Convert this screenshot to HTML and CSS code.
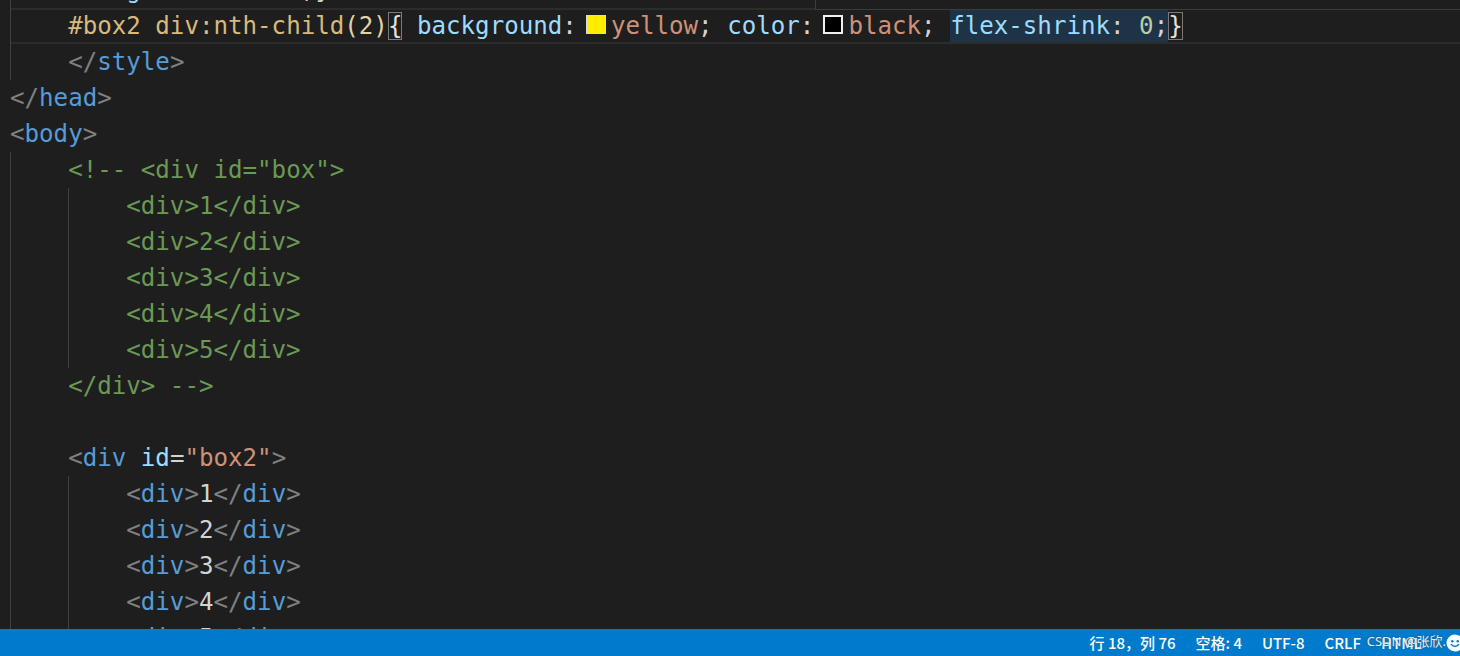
FILE: index.html
```html
<!DOCTYPE html>
<html lang="zh">
<head>
<meta charset="utf-8">
<title>editor</title>
<link rel="stylesheet" href="styles.css">
</head>
<body>
<div class="editor">
  <div class="code">
    <div class="ln"><span class="ind g"></span><span class="pr">background</span><span class="pn">: </span><span class="pn">blue;}</span></div>
    <div class="ln cur"><span class="ind g"></span><span class="sel">#box2 div:nth-child</span><span class="br">(2)</span><span class="bm">{</span><span class="pn"> </span><span class="pr">background</span><span class="pn">:</span><span class="sw sw-y"></span><span class="st">yellow</span><span class="pn">; </span><span class="pr">color</span><span class="pn">:</span><span class="sw sw-k"></span><span class="st">black</span><span class="pn">; </span><span class="hl"><span class="pr">flex-shrink</span><span class="pn">: </span><span class="nu">0</span><span class="pn">;</span></span><span class="bm">}</span></div>
    <div class="ln"><span class="ind g"></span><span class="tg">&lt;/</span><span class="tn">style</span><span class="tg">&gt;</span></div>
    <div class="ln"><span class="tg">&lt;/</span><span class="tn">head</span><span class="tg">&gt;</span></div>
    <div class="ln"><span class="tg">&lt;</span><span class="tn">body</span><span class="tg">&gt;</span></div>
    <div class="ln"><span class="ind g"></span><span class="cm">&lt;!-- &lt;div id="box"&gt;</span></div>
    <div class="ln"><span class="ind g"></span><span class="ind g"></span><span class="cm">&lt;div&gt;1&lt;/div&gt;</span></div>
    <div class="ln"><span class="ind g"></span><span class="ind g"></span><span class="cm">&lt;div&gt;2&lt;/div&gt;</span></div>
    <div class="ln"><span class="ind g"></span><span class="ind g"></span><span class="cm">&lt;div&gt;3&lt;/div&gt;</span></div>
    <div class="ln"><span class="ind g"></span><span class="ind g"></span><span class="cm">&lt;div&gt;4&lt;/div&gt;</span></div>
    <div class="ln"><span class="ind g"></span><span class="ind g"></span><span class="cm">&lt;div&gt;5&lt;/div&gt;</span></div>
    <div class="ln"><span class="ind g"></span><span class="cm">&lt;/div&gt; --&gt;</span></div>
    <div class="ln"><span class="ind g"></span></div>
    <div class="ln"><span class="ind g"></span><span class="tg">&lt;</span><span class="tn">div</span><span class="pn"> </span><span class="at">id</span><span class="pn">=</span><span class="st">"box2"</span><span class="tg">&gt;</span></div>
    <div class="ln"><span class="ind g"></span><span class="ind g"></span><span class="tg">&lt;</span><span class="tn">div</span><span class="tg">&gt;</span><span class="tx">1</span><span class="tg">&lt;/</span><span class="tn">div</span><span class="tg">&gt;</span></div>
    <div class="ln"><span class="ind g"></span><span class="ind g"></span><span class="tg">&lt;</span><span class="tn">div</span><span class="tg">&gt;</span><span class="tx">2</span><span class="tg">&lt;/</span><span class="tn">div</span><span class="tg">&gt;</span></div>
    <div class="ln"><span class="ind g"></span><span class="ind g"></span><span class="tg">&lt;</span><span class="tn">div</span><span class="tg">&gt;</span><span class="tx">3</span><span class="tg">&lt;/</span><span class="tn">div</span><span class="tg">&gt;</span></div>
    <div class="ln"><span class="ind g"></span><span class="ind g"></span><span class="tg">&lt;</span><span class="tn">div</span><span class="tg">&gt;</span><span class="tx">4</span><span class="tg">&lt;/</span><span class="tn">div</span><span class="tg">&gt;</span></div>
    <div class="ln"><span class="ind g"></span><span class="ind g"></span><span class="tg">&lt;</span><span class="tn">div</span><span class="tg">&gt;</span><span class="tx">5</span><span class="tg">&lt;/</span><span class="tn">div</span><span class="tg">&gt;</span></div>
  </div>
  <div class="hover"></div>
</div>
<div class="status">
  <span class="si">行 18，列 76</span>
  <span class="si">空格: 4</span>
  <span class="si">UTF-8</span>
  <span class="si">CRLF</span>
  <span class="si">HTML</span>
  <span class="si fb"><svg width="18" height="18" viewBox="0 0 18 18"><circle cx="9" cy="9" r="8.5" fill="#ffffff"/><circle cx="6.3" cy="7.2" r="1.2" fill="#007acc"/><circle cx="11.7" cy="7.2" r="1.2" fill="#007acc"/><path d="M5.2 10.6 Q9 14.2 12.8 10.6" fill="none" stroke="#007acc" stroke-width="1.4" stroke-linecap="round"/></svg></span>
  <span class="wm">CSDN @张欣.</span>
</div>
</body>
</html>
```
FILE: styles.css
```css
html, body {
  margin: 0;
  padding: 0;
}
body {
  width: 1460px;
  height: 656px;
  overflow: hidden;
  background: #1e1e1e;
  display: flex;
  flex-direction: column;
}
.editor {
  position: relative;
  flex: 1;
  overflow: hidden;
}
.code {
  margin-top: -28px;
  padding-left: 10px;
  font-family: "DejaVu Sans Mono", monospace;
  font-size: 24.15px;
  color: #d4d4d4;
}
.ln {
  height: 36px;
  line-height: 36px;
  white-space: pre;
  overflow: hidden;
}
.cur {
  box-shadow: inset 0 2px 0 #2c2c2c, inset 0 -2px 0 #2c2c2c;
}
.ind {
  display: inline-block;
  width: 4ch;
  height: 36px;
  vertical-align: top;
  box-sizing: border-box;
}
.g {
  border-left: 1px solid #404040;
}
.pr { color: #9cdcfe; }
.pn { color: #d4d4d4; }
.sel { color: #d7ba7d; }
.br { color: #e2d4a8; }
.st { color: #ce9178; }
.nu { color: #b5cea8; }
.tg { color: #808080; }
.tn { color: #569cd6; }
.at { color: #9cdcfe; }
.tx { color: #d4d4d4; }
.cm { color: #6a9955; }
.bm {
  color: #e0e0e0;
  outline: 1px solid #7a7a7a;
  outline-offset: -1px;
}
.hl {
  background: #1f3346;
  padding: 2px 0;
}
.sw {
  display: inline-block;
  width: 20px;
  height: 19px;
  box-sizing: border-box;
  margin: 0 5px 0 9px;
  vertical-align: baseline;
}
.sw-y {
  background: #ffec00;
  border: 1px solid #d8d8d8;
}
.sw-k {
  background: #000000;
  border: 2px solid #f0f0f0;
}
.hover {
  position: absolute;
  top: 0;
  left: 815px;
  right: 0;
  height: 9px;
  background: #1e1e1e;
  border-left: 1px solid #3c3c3c;
  border-bottom: 1px solid #3c3c3c;
}
.status {
  position: relative;
  height: 27px;
  flex: none;
  background: #007acc;
  color: #ffffff;
  display: flex;
  justify-content: flex-end;
  align-items: center;
  font-family: "Noto Sans CJK SC", "Noto Sans", sans-serif;
  font-size: 15px;
  font-weight: 500;
  padding-right: 0;
  overflow: hidden;
}
.si {
  margin-left: 20px;
  white-space: nowrap;
}
.fb {
  display: flex;
  margin-left: 24px;
  margin-right: -4px;
}
.wm {
  position: absolute;
  right: 14px;
  top: 2px;
  font-family: "Noto Sans", "Noto Sans CJK SC", sans-serif;
  font-size: 13px;
  font-weight: 400;
  color: rgba(255, 255, 255, 0.9);
  text-shadow: 0 0 2px rgba(80, 80, 80, 0.9);
}
```
